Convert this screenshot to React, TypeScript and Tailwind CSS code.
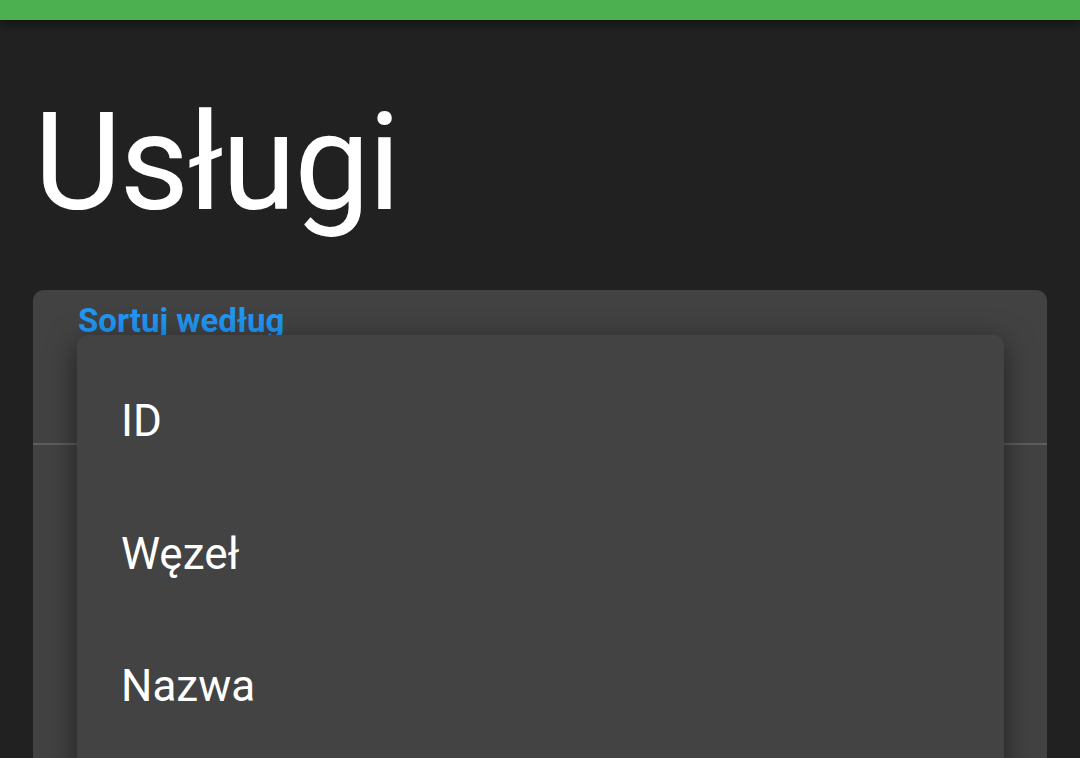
import React from "react";

const options = ["ID", "Węzeł", "Nazwa"];

export default function App() {
  return (
    <div
      className="h-[758px] w-full overflow-hidden bg-[#212121] text-white"
      style={{ fontFamily: "Roboto, 'Noto Sans', sans-serif" }}
    >
      {/* Top bar */}
      <div className="relative z-10 h-[20px] w-full bg-[#4caf50] shadow-[0_4px_10px_rgba(0,0,0,0.45)]"></div>

      <div className="px-[33px]">
        {/* Page title */}
        <h1 className="mt-[76px] pl-[1px] text-[135px] font-normal leading-none tracking-[-2px]">
          Usługi
        </h1>

        {/* Filter card */}
        <div className="relative mt-[59px] h-[500px] rounded-t-[11px] bg-[#424242]">
          <div className="px-[45px] pt-[14px]">
            <span className="text-[33px] font-bold leading-none text-[#2196f3]">
              Sortuj według
            </span>
          </div>
          <div className="mt-[104px] h-[2px] w-full bg-[#5e5e5e]"></div>

          {/* Open select menu */}
          <div className="absolute left-[44px] top-[45px] h-[480px] w-[927px] rounded-[11px] bg-[#434343] pt-[20px] shadow-[0_8px_30px_rgba(0,0,0,0.5)]">
            {options.map((opt) => (
              <div
                key={opt}
                className="flex h-[132.5px] items-center px-[44px] text-[44px] leading-none text-white"
              >
                {opt}
              </div>
            ))}
          </div>
        </div>
      </div>
    </div>
  );
}
